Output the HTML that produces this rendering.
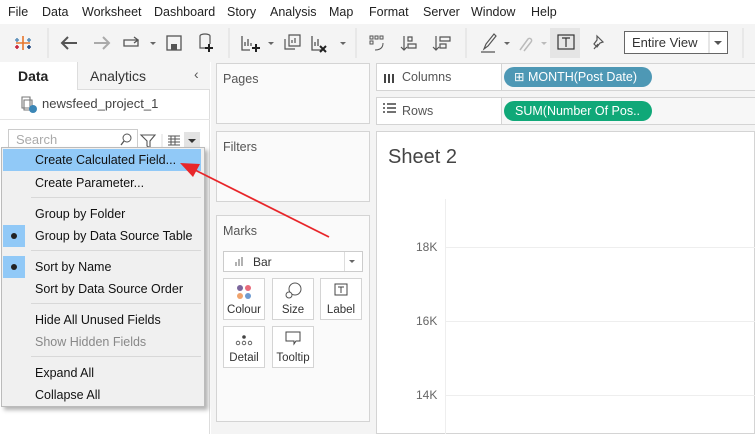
<!DOCTYPE html>
<html><head><meta charset="utf-8"><style>
*{margin:0;padding:0;box-sizing:border-box}
body{width:755px;height:434px;overflow:hidden;position:relative;background:#fff;font-family:"Liberation Sans",Arial,sans-serif;font-size:12px;color:#222}
.a{position:absolute}
.menu span{position:absolute;top:5px;font-size:12.5px}
.tb{background:#f4f4f4}
.card{position:absolute;background:#fafafa;border:1px solid #d4d4d4}
.lbl{font-size:12.5px;color:#555}
.mi{position:absolute;left:35px;font-size:12.5px;color:#111;height:22px;line-height:22px}
.sep{position:absolute;left:31px;width:170px;height:1px;background:#d8d8d8}
.mb{position:absolute;width:42px;height:42px;border:1px solid #d4d4d4;background:#fff;text-align:center;font-size:11.5px;color:#333}
</style></head><body>
<div class="menu a" style="left:0;top:0;width:755px;height:24px;background:#fff">
<span style="left:8px">File</span><span style="left:42px">Data</span><span style="left:82px">Worksheet</span><span style="left:154px">Dashboard</span><span style="left:227px">Story</span><span style="left:270px">Analysis</span><span style="left:329px">Map</span><span style="left:369px">Format</span><span style="left:423px">Server</span><span style="left:471px">Window</span><span style="left:531px">Help</span>
</div>
<div class="a tb" style="left:0;top:24px;width:755px;height:38px"></div>
<svg class="a" style="left:0;top:24px" width="755" height="38">
<g stroke-width="1.6">
<path d="M23 12v14M16 19h14" stroke="#e8762c"/><path d="M17 14v4M15 16h4" stroke="#5b8fb9"/><path d="M29 14v4M27 16h4" stroke="#5b8fb9"/><path d="M17 21v4M15 23h4" stroke="#c72037"/><path d="M29 21v4M27 23h4" stroke="#1f457e"/>
</g>
<line x1="48" y1="4" x2="48" y2="34" stroke="#ddd"/>
<path d="M62 19h15M68 13l-6 6 6 6" stroke="#555" stroke-width="2" fill="none"/>
<path d="M94 19h15M103 13l6 6-6 6" stroke="#aaa" stroke-width="2" fill="none"/>
<path d="M124 16h14v6h-14zM134 13l4 3-4 3" stroke="#555" stroke-width="1.3" fill="none"/>
<path d="M150 18l3 3 3-3z" fill="#666"/>
<rect x="167" y="12" width="14" height="14" fill="none" stroke="#555" stroke-width="1.3"/><rect x="171" y="20" width="6" height="6" fill="#555"/>
<path d="M200 12a5 2 0 0 1 10 0v8M200 12v12h6" stroke="#555" stroke-width="1.2" fill="none"/><path d="M209 20v8M205 24h8" stroke="#222" stroke-width="2"/>
<line x1="229" y1="4" x2="229" y2="34" stroke="#ddd"/>
<path d="M242 12v14h8M245 22v-4M248 22v-7M251 22v-3" stroke="#555" stroke-width="1.3" fill="none"/><path d="M256 20v8M252 24h8" stroke="#222" stroke-width="2"/>
<path d="M268 18l3 3 3-3z" fill="#666"/>
<path d="M285 15v10h10M289 11h11v11h-11z M292 19v-3M295 19v-5" stroke="#555" stroke-width="1.2" fill="none"/>
<path d="M312 12v14h10M315 22v-4M318 22v-7" stroke="#555" stroke-width="1.3" fill="none"/><path d="M320 22l6 6M326 22l-6 6" stroke="#222" stroke-width="2"/>
<path d="M340 18l3 3 3-3z" fill="#666"/>
<line x1="356" y1="4" x2="356" y2="34" stroke="#ddd"/>
<path d="M370 12h3v3h-3zM375 12h3v3h-3zM380 12h3v3h-3zM370 17h3v3h-3zM383 19q0 7-8 7" stroke="#555" stroke-width="1" fill="none"/>
<path d="M404 12v14M401 23l3 3 3-3M408 13h4v4h-4zM408 20h8v4h-8z" stroke="#555" stroke-width="1.2" fill="none"/>
<path d="M436 12v14M433 23l3 3 3-3M440 13h10v4h-10zM440 20h6v4h-6z" stroke="#555" stroke-width="1.2" fill="none"/>
<line x1="466" y1="4" x2="466" y2="34" stroke="#ddd"/>
<path d="M484 25l2-5 8-10 2 2-8 10z M481 28h14" stroke="#555" stroke-width="1.2" fill="none"/>
<path d="M504 18l3 3 3-3z" fill="#666"/>
<path d="M520 26l8-11a2 2 0 0 1 3 3l-7 9" stroke="#bbb" stroke-width="1.5" fill="none"/>
<path d="M541 18l3 3 3-3z" fill="#bbb"/>
<rect x="550" y="4" width="30" height="30" fill="#e5e5e5"/>
<rect x="558" y="11" width="16" height="14" fill="none" stroke="#333" stroke-width="1.2"/><path d="M562 14h8M566 14v9" stroke="#333" stroke-width="1.2"/>
<path d="M594 25l4-5M597 12l6 6-3 1-3 4-3-3 3-4z" stroke="#555" stroke-width="1.2" fill="none"/>
<rect x="624.5" y="7.5" width="103" height="22" fill="#fff" stroke="#666"/>
<line x1="709" y1="8" x2="709" y2="29" stroke="#ccc"/>
<path d="M714 17l4 4 4-4z" fill="#555"/>
<text x="632" y="23" font-size="13" fill="#333" font-family="Liberation Sans">Entire View</text>
<line x1="743" y1="4" x2="743" y2="34" stroke="#ddd"/>
</svg>
<div class="a" style="left:0;top:62px;width:210px;height:372px;background:#fff;border-right:1px solid #ddd"></div>
<div class="a" style="left:77px;top:62px;width:133px;height:28px;background:#f4f4f4;border-left:1px solid #ddd;border-bottom:1px solid #ddd"></div>
<div class="a" style="left:18px;top:68px;font-size:14px;font-weight:bold">Data</div>
<div class="a" style="left:90px;top:68px;font-size:14px;color:#333">Analytics</div>
<div class="a" style="left:194px;top:66px;font-size:14px;color:#555">‹</div>
<svg class="a" style="left:18px;top:94px" width="20" height="20"><path d="M4 3h8v11h-8zM6 6h8v10h-8z" fill="none" stroke="#777" stroke-width="1.1"/><circle cx="15" cy="15" r="4" fill="#3b86b6"/></svg>
<div class="a" style="left:42px;top:96px;font-size:13px;color:#444">newsfeed_project_1</div>
<div class="a" style="left:0;top:119px;width:210px;height:1px;background:#e5e5e5"></div>
<div class="a" style="left:8px;top:129px;width:130px;height:22px;border:1px solid #ccc;background:#fff"></div>
<div class="a" style="left:16px;top:132px;font-size:13px;color:#aaa">Search</div>
<svg class="a" style="left:118px;top:131px" width="90" height="20"><circle cx="9" cy="7" r="4" fill="none" stroke="#555"/><path d="M6 10l-3 4" stroke="#555" stroke-width="1.3"/><path d="M23 4h14l-5 6v7l-3-2v-5z" fill="none" stroke="#555" stroke-width="1.1"/><line x1="44" y1="3" x2="44" y2="18" stroke="#ddd"/><path d="M50 5h12M50 8h12M50 11h12M50 14h12M53 5v9M57 5v9" stroke="#555"/><rect x="66" y="1" width="16" height="18" fill="#e3e3e3"/><path d="M70 8l4 4 4-4z" fill="#333"/></svg>
<div class="a" style="left:1px;top:147px;width:204px;height:260px;background:#f0f0f0;border:1px solid #bbb;box-shadow:3px 3px 4px rgba(0,0,0,.3)"></div>
<div class="a" style="left:3px;top:149px;width:198px;height:22px;background:#91c9f7"></div>
<div class="a" style="left:3px;top:225px;width:22px;height:22px;background:#91c9f7"></div>
<div class="a" style="left:3px;top:256px;width:22px;height:22px;background:#91c9f7"></div>
<div class="a" style="left:11px;top:233px;width:6px;height:6px;border-radius:3px;background:#222"></div>
<div class="a" style="left:11px;top:264px;width:6px;height:6px;border-radius:3px;background:#222"></div>
<div class="mi" style="top:149px">Create Calculated Field...</div>
<div class="mi" style="top:172px">Create Parameter...</div>
<div class="sep" style="top:197px"></div>
<div class="mi" style="top:203px">Group by Folder</div>
<div class="mi" style="top:225px">Group by Data Source Table</div>
<div class="sep" style="top:250px"></div>
<div class="mi" style="top:256px">Sort by Name</div>
<div class="mi" style="top:278px">Sort by Data Source Order</div>
<div class="sep" style="top:303px"></div>
<div class="mi" style="top:309px">Hide All Unused Fields</div>
<div class="mi" style="top:331px;color:#888">Show Hidden Fields</div>
<div class="sep" style="top:356px"></div>
<div class="mi" style="top:362px">Expand All</div>
<div class="mi" style="top:384px">Collapse All</div>
<div class="a" style="left:211px;top:62px;width:164px;height:372px;background:#f4f4f4"></div>
<div class="card" style="left:216px;top:63px;width:154px;height:61px"></div>
<div class="a lbl" style="left:223px;top:72px">Pages</div>
<div class="card" style="left:216px;top:131px;width:154px;height:71px"></div>
<div class="a lbl" style="left:223px;top:140px">Filters</div>
<div class="card" style="left:216px;top:215px;width:154px;height:207px"></div>
<div class="a lbl" style="left:223px;top:224px">Marks</div>
<div class="a" style="left:223px;top:251px;width:140px;height:21px;border:1px solid #ccc;background:#fff"></div>
<div class="a" style="left:344px;top:252px;width:1px;height:19px;background:#ddd"></div>
<svg class="a" style="left:234px;top:254px" width="130" height="16"><path d="M2 12V8M5 12V5M8 12V3" stroke="#999" stroke-width="1.5"/><path d="M115 6l3 3 3-3z" fill="#666"/></svg>
<div class="a" style="left:253px;top:255px;font-size:12px;color:#333">Bar</div>
<div class="mb" style="left:223px;top:278px"><svg width="40" height="22"><circle cx="16" cy="9" r="3" fill="#7b669c"/><circle cx="24" cy="9" r="3" fill="#e86b7b"/><circle cx="16" cy="17" r="3" fill="#f0a36c"/><circle cx="24" cy="17" r="3" fill="#6f9bd0"/></svg><div>Colour</div></div>
<div class="mb" style="left:272px;top:278px"><svg width="40" height="22"><circle cx="22" cy="10" r="6" fill="none" stroke="#555"/><circle cx="16" cy="16" r="3" fill="#fff" stroke="#555"/></svg><div>Size</div></div>
<div class="mb" style="left:320px;top:278px"><svg width="40" height="22"><rect x="14" y="5" width="12" height="11" fill="none" stroke="#444"/><path d="M17 8h6M20 8v6" stroke="#444"/></svg><div>Label</div></div>
<div class="mb" style="left:223px;top:326px"><svg width="40" height="22"><circle cx="20" cy="10" r="1.8" fill="#444"/><circle cx="14" cy="16" r="1.8" fill="none" stroke="#444" stroke-width=".8"/><circle cx="20" cy="16" r="1.8" fill="none" stroke="#444" stroke-width=".8"/><circle cx="26" cy="16" r="1.8" fill="none" stroke="#444" stroke-width=".8"/></svg><div>Detail</div></div>
<div class="mb" style="left:272px;top:326px"><svg width="40" height="22"><path d="M13 5h14v9h-4l-2 3v-3h-8z" fill="none" stroke="#444"/></svg><div>Tooltip</div></div>
<div class="a" style="left:375px;top:62px;width:380px;height:372px;background:#f4f4f4"></div>
<div class="a" style="left:376px;top:63px;width:379px;height:28px;background:#fff;border:1px solid #d4d4d4"></div>
<div class="a" style="left:376px;top:97px;width:379px;height:28px;background:#fff;border:1px solid #d4d4d4"></div>
<div class="a" style="left:501px;top:63px;width:254px;height:28px;background:#f7f7f7;border-left:1px solid #d4d4d4;border-top:1px solid #d4d4d4;border-bottom:1px solid #d4d4d4"></div>
<div class="a" style="left:501px;top:97px;width:254px;height:28px;background:#f7f7f7;border-left:1px solid #d4d4d4;border-top:1px solid #d4d4d4;border-bottom:1px solid #d4d4d4"></div>
<svg class="a" style="left:383px;top:70px" width="14" height="50"><path d="M2 4v9M6 4v9M10 4v9" stroke="#444" stroke-width="2"/><path d="M0 34h2M4 34h9M0 38h2M4 38h9M0 42h2M4 42h9" stroke="#444" stroke-width="1.5"/></svg>
<div class="a lbl" style="left:402px;top:70px">Columns</div>
<div class="a lbl" style="left:402px;top:104px">Rows</div>
<div class="a" style="left:504px;top:67px;width:148px;height:20px;border-radius:10px;background:#4e98b5;color:#fff;font-size:12.5px;line-height:20px;padding-left:10px">⊞ MONTH(Post Date)</div>
<div class="a" style="left:504px;top:101px;width:148px;height:20px;border-radius:10px;background:#10a878;color:#fff;font-size:12.5px;line-height:20px;padding-left:11px">SUM(Number Of Pos..</div>
<div class="a" style="left:376px;top:131px;width:379px;height:303px;background:#fff;border:1px solid #d4d4d4"></div>
<div class="a" style="left:388px;top:146px;font-size:20px;color:#444">Sheet 2</div>
<div class="a" style="left:445px;top:199px;width:1px;height:235px;background:#eee"></div>
<div class="a" style="left:445px;top:247px;width:310px;height:1px;background:#eee"></div>
<div class="a" style="left:445px;top:321px;width:310px;height:1px;background:#eee"></div>
<div class="a" style="left:445px;top:395px;width:310px;height:1px;background:#eee"></div>
<div class="a" style="left:416px;top:240px;font-size:12px;color:#666">18K</div>
<div class="a" style="left:416px;top:314px;font-size:12px;color:#666">16K</div>
<div class="a" style="left:416px;top:388px;font-size:12px;color:#666">14K</div>
<svg class="a" style="left:0;top:0" width="755" height="434"><line x1="329" y1="237" x2="195" y2="170" stroke="#e8262a" stroke-width="1.8"/><path d="M180 163l20 1-7 13z" fill="#e8262a"/></svg>
</body></html>
